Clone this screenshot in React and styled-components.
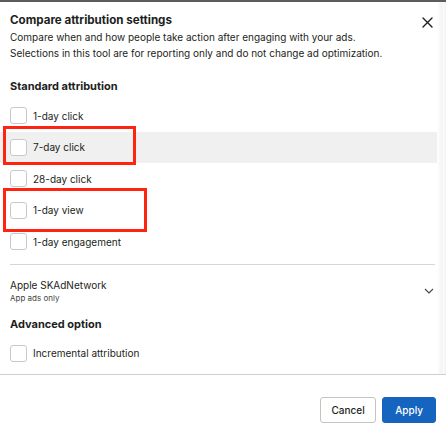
import React from "react";
import styled, { createGlobalStyle } from "styled-components";

const Global = createGlobalStyle`
  html, body { margin: 0; padding: 0; background: #fff; }
  body { font-family: Inter, Roboto, "Liberation Sans", sans-serif; color: #1c1e21; }
  * { box-sizing: border-box; }
`;

const Dialog = styled.div`
  width: 446px;
  height: 435px;
  border-top: 2px solid #5c5c5c;
  display: flex;
  flex-direction: column;
  background: #fff;
`;

const ScrollArea = styled.div`
  height: 372px;
  display: flex;
`;

const Content = styled.div`
  width: 437px;
  display: flex;
  flex-direction: column;
`;

const Track = styled.div`
  flex: 1;
  background: linear-gradient(to right, #ffffff 0%, #f3f3f3 55%, #fbfbfb 70%, #f1f1f1 100%);
`;

const Header = styled.div`
  display: flex;
  justify-content: space-between;
  padding: 10px 0 0 10px;
`;

const Title = styled.h1`
  margin: 0;
  font-size: 11.6px;
  line-height: 16px;
  font-weight: 700;
`;

const Sub = styled.p`
  margin: 0;
  padding-left: 10px;
  font-size: 10px;
  line-height: 16px;
  color: #1c1e21;
`;

const CloseBtn = styled.button`
  border: 0;
  background: none;
  padding: 0;
  margin: 3px 3px 0 0;
  width: 14px;
  height: 14px;
  display: flex;
  align-items: center;
  justify-content: center;
  cursor: pointer;
`;

const SectionTitle = styled.h2`
  margin: ${(p) => p.$mt}px 0 0 0;
  padding-left: 10px;
  font-size: 11px;
  line-height: 16px;
  font-weight: 700;
`;

const List = styled.div`
  display: flex;
  flex-direction: column;
  margin-top: ${(p) => p.$mt}px;
`;

const Row = styled.label`
  position: relative;
  height: 31.5px;
  display: flex;
  align-items: center;
  gap: 6px;
  padding-left: 10px;
  font-size: 10px;
  background: ${(p) => (p.$hover ? "#f0f0f0" : "transparent")};
`;

const Box = styled.span`
  width: 17px;
  height: 17px;
  border: 1px solid #c9c9c9;
  border-radius: 3px;
  background: #fff;
  flex: none;
`;

const Highlight = styled.span`
  position: absolute;
  left: 3px;
  top: ${(p) => p.$top}px;
  width: ${(p) => p.$w}px;
  height: ${(p) => p.$h}px;
  border: 3.5px solid #ff2410;
  pointer-events: none;
`;

const Divider = styled.div`
  margin: 6px 0 0 10px;
  width: 425px;
  height: 1px;
  background: #d6d6d6;
`;

const Expander = styled.div`
  display: flex;
  align-items: center;
  justify-content: space-between;
  padding: 13px 3px 0 10px;
`;

const ExpTitle = styled.div`
  font-size: 10px;
  line-height: 14px;
`;

const ExpSub = styled.div`
  font-size: 8px;
  line-height: 12px;
  color: #444;
`;

const Footer = styled.div`
  border-top: 1px solid #cfcfcf;
  flex: 1;
  display: flex;
  justify-content: flex-end;
  align-items: flex-start;
  gap: 6px;
  padding: 22px 10px 0 0;
`;

const Button = styled.button`
  height: 26px;
  padding: 0 ${(p) => (p.$primary ? 12 : 10.5)}px;
  border-radius: 3px;
  font-family: inherit;
  font-size: 10px;
  font-weight: 500;
  border: 1px solid ${(p) => (p.$primary ? "#1464c0" : "#c4c4c4")};
  background: ${(p) => (p.$primary ? "#1464c0" : "#fff")};
  color: ${(p) => (p.$primary ? "#fff" : "#1c1e21")};
`;

const options = [
  { label: "1-day click" },
  { label: "7-day click", hover: true, hl: { top: -6, w: 133, h: 39 } },
  { label: "28-day click" },
  { label: "1-day view", hl: { top: -7, w: 144, h: 44 } },
  { label: "1-day engagement" },
];

export default function App() {
  return (
    <>
      <Global />
      <Dialog>
        <ScrollArea>
          <Content>
            <Header>
              <Title>Compare attribution settings</Title>
              <CloseBtn aria-label="Close">
                <svg width="11" height="11" viewBox="0 0 11 11">
                  <path d="M1 1L10 10M10 1L1 10" stroke="#1c1e21" strokeWidth="1.4" strokeLinecap="round" />
                </svg>
              </CloseBtn>
            </Header>
            <Sub>
              Compare when and how people take action after engaging with your ads.
              <br />
              Selections in this tool are for reporting only and do not change ad optimization.
            </Sub>
            <SectionTitle $mt={17}>Standard attribution</SectionTitle>
            <List $mt={6}>
              {options.map((o) => (
                <Row key={o.label} $hover={o.hover}>
                  <Box />
                  {o.label}
                  {o.hl && <Highlight $top={o.hl.top} $w={o.hl.w} $h={o.hl.h} />}
                </Row>
              ))}
            </List>
            <Divider />
            <Expander>
              <div>
                <ExpTitle>Apple SKAdNetwork</ExpTitle>
                <ExpSub>App ads only</ExpSub>
              </div>
              <svg width="10" height="6" viewBox="0 0 10 6">
                <path d="M1 1L5 5L9 1" fill="none" stroke="#444" strokeWidth="1.1" />
              </svg>
            </Expander>
            <SectionTitle $mt={12}>Advanced option</SectionTitle>
            <List $mt={6}>
              <Row>
                <Box />
                Incremental attribution
              </Row>
            </List>
          </Content>
          <Track />
        </ScrollArea>
        <Footer>
          <Button>Cancel</Button>
          <Button $primary>Apply</Button>
        </Footer>
      </Dialog>
    </>
  );
}
